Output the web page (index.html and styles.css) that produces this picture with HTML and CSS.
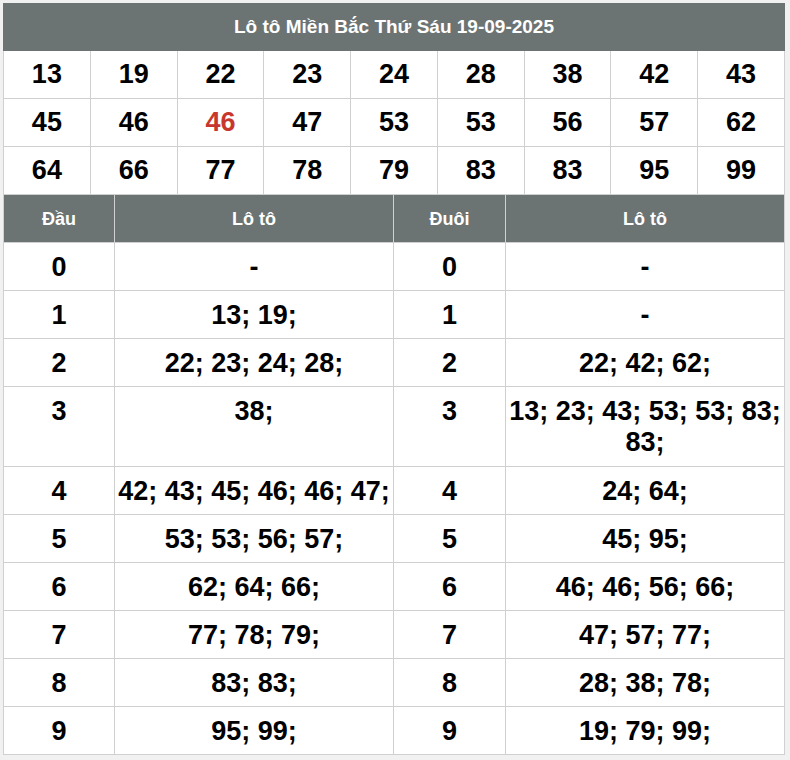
FILE: index.html
```html
<!DOCTYPE html>
<html lang="vi">
<head>
<meta charset="utf-8">
<link rel="stylesheet" href="styles.css">
</head>
<body>
<div class="wrap">
  <table class="grid">
    <thead>
      <tr><th colspan="9" class="title">Lô tô Miền Bắc Thứ Sáu 19-09-2025</th></tr>
    </thead>
    <tbody>
      <tr><td>13</td><td>19</td><td>22</td><td>23</td><td>24</td><td>28</td><td>38</td><td>42</td><td>43</td></tr>
      <tr><td>45</td><td>46</td><td class="red">46</td><td>47</td><td>53</td><td>53</td><td>56</td><td>57</td><td>62</td></tr>
      <tr><td>64</td><td>66</td><td>77</td><td>78</td><td>79</td><td>83</td><td>83</td><td>95</td><td>99</td></tr>
    </tbody>
  </table>
  <table class="dd">
    <colgroup>
      <col class="c-key"><col class="c-val"><col class="c-key2"><col class="c-val">
    </colgroup>
    <thead>
      <tr><th>Đầu</th><th>Lô tô</th><th>Đuôi</th><th>Lô tô</th></tr>
    </thead>
    <tbody>
      <tr><td>0</td><td>-</td><td>0</td><td>-</td></tr>
      <tr><td>1</td><td>13; 19;</td><td>1</td><td>-</td></tr>
      <tr><td>2</td><td>22; 23; 24; 28;</td><td>2</td><td>22; 42; 62;</td></tr>
      <tr class="tall"><td>3</td><td>38;</td><td>3</td><td>13; 23; 43; 53; 53; 83; 83;</td></tr>
      <tr><td>4</td><td>42; 43; 45; 46; 46; 47;</td><td>4</td><td>24; 64;</td></tr>
      <tr><td>5</td><td>53; 53; 56; 57;</td><td>5</td><td>45; 95;</td></tr>
      <tr><td>6</td><td>62; 64; 66;</td><td>6</td><td>46; 46; 56; 66;</td></tr>
      <tr><td>7</td><td>77; 78; 79;</td><td>7</td><td>47; 57; 77;</td></tr>
      <tr><td>8</td><td>83; 83;</td><td>8</td><td>28; 38; 78;</td></tr>
      <tr><td>9</td><td>95; 99;</td><td>9</td><td>19; 79; 99;</td></tr>
    </tbody>
  </table>
</div>
</body>
</html>
```
FILE: styles.css
```css
html, body {
  margin: 0;
  padding: 0;
  background: #f1f1f1;
}
body {
  font-family: "Liberation Sans", Arial, sans-serif;
  color: #000;
}
.wrap {
  width: 782px;
  margin: 3px 0 0 3px;
  background: #fff;
}
table {
  width: 782px;
  border-collapse: collapse;
  table-layout: fixed;
}
.grid th.title {
  background: #6c7373;
  color: #fff;
  font-size: 19px;
  font-weight: bold;
  height: 46px;
  padding: 0;
  text-align: center;
  border: 1px solid #6c7373;
}
.grid td {
  border: 1px solid #d0d0d0;
  height: 47px;
  padding: 0;
  text-align: center;
  font-size: 27px;
  font-weight: bold;
}
.grid td.red {
  color: #c8372d;
}
.c-key { width: 111px; }
.c-key2 { width: 112px; }
.dd th {
  background: #6c7373;
  color: #fff;
  font-size: 18px;
  font-weight: bold;
  height: 45px;
  padding: 2px 0 0;
  border: 1px solid #d0d0d0;
  border-top: none;
}
.dd td {
  border: 1px solid #d0d0d0;
  height: 45px;
  padding: 2px 1px 0;
  text-align: center;
  vertical-align: middle;
  font-size: 27px;
  font-weight: bold;
  line-height: 31px;
}
.dd tr.tall td {
  height: 70px;
  vertical-align: top;
  padding-top: 9px;
}
```
